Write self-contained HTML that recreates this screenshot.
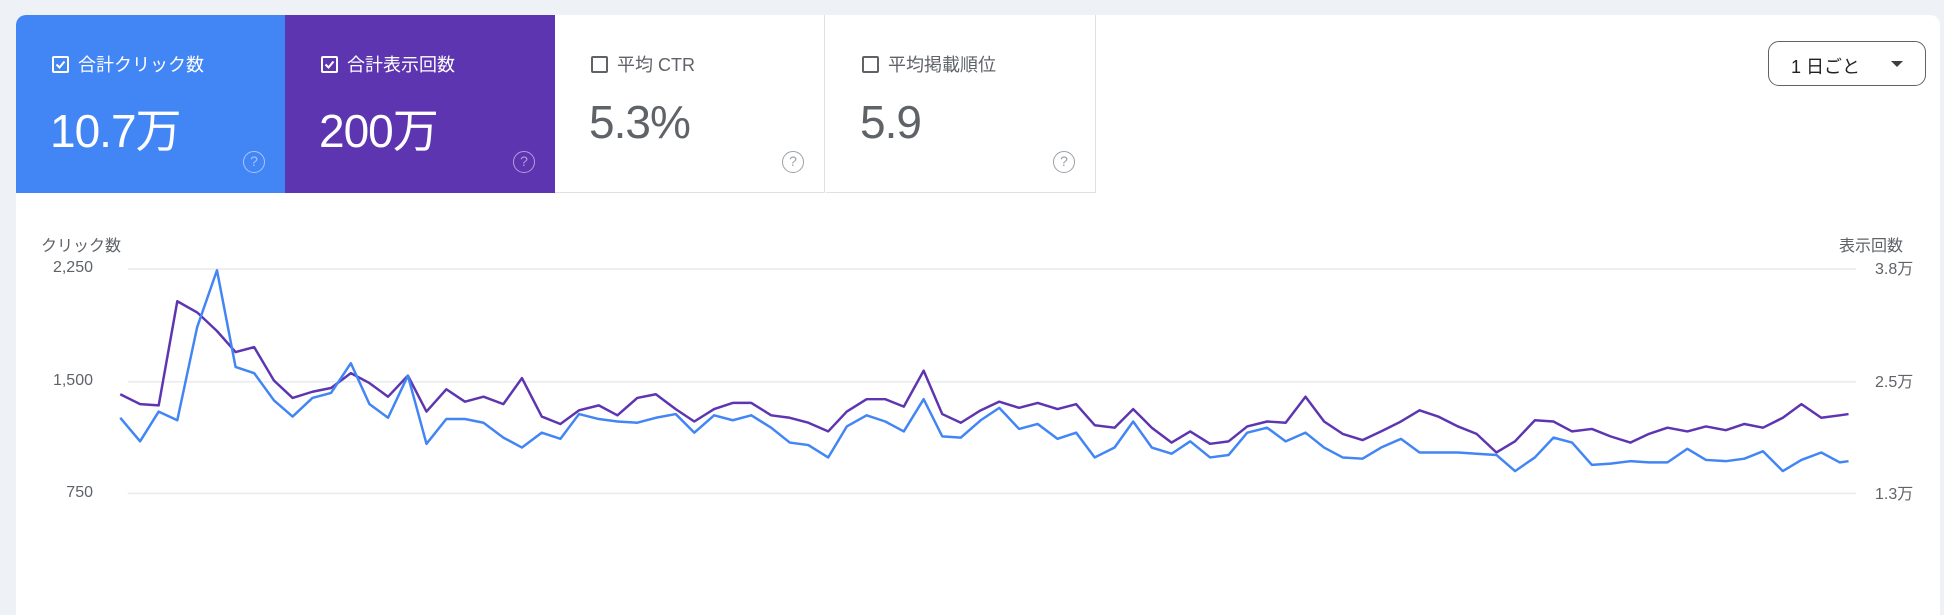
<!DOCTYPE html>
<html><head><meta charset="utf-8"><style>
*{margin:0;padding:0;box-sizing:border-box}
body{width:1944px;height:602px;background:#eef2f7;position:relative;overflow:hidden;font-family:"Liberation Sans","Noto Sans CJK JP",sans-serif}
.card{position:absolute;left:16px;top:15px;width:1924px;height:600px;background:#fff;border-radius:10px 10px 0 0}
.tile{position:absolute;top:15px;height:178px;width:270px}
.lab{position:absolute;left:36px;top:36px;font-size:18px;display:flex;align-items:center}
.cb{width:17px;height:17px;border:2px solid currentColor;border-radius:2px;margin-right:9px;position:relative}
.num{position:absolute;left:34px;top:78px;font-size:46px;letter-spacing:-1px}
.q{position:absolute;right:20px;top:136px;width:22px;height:22px;border:1.5px solid currentColor;border-radius:50%;font-size:14px;text-align:center;line-height:19px}
.axl{position:absolute;font-size:16px;color:#5f6368}
</style></head><body>
<div class="card"></div>
<div class="tile" style="left:16px;background:#4285f4;color:#fff;border-radius:10px 0 0 0;width:269px">
 <div class="lab"><div class="cb"><svg width="13" height="13" viewBox="0 0 13 13" style="position:absolute;left:0;top:0"><path d="M2.5 6.5l3 3 5-6" stroke="#fff" stroke-width="2" fill="none"/></svg></div>合計クリック数</div>
 <div class="num" style="top:80px">10.7万</div><div class="q" style="color:#a8c7fa">?</div></div>
<div class="tile" style="left:285px;background:#5e35b1;color:#fff">
 <div class="lab"><div class="cb"><svg width="13" height="13" viewBox="0 0 13 13" style="position:absolute;left:0;top:0"><path d="M2.5 6.5l3 3 5-6" stroke="#fff" stroke-width="2" fill="none"/></svg></div>合計表示回数</div>
 <div class="num" style="top:80px">200万</div><div class="q" style="color:#b39ddb">?</div></div>
<div class="tile" style="left:555px;background:#fff;color:#5f6368;border-right:1px solid #e0e0e0;border-bottom:1px solid #e0e0e0">
 <div class="lab"><div class="cb"></div>平均 CTR</div>
 <div class="num" style="top:80px">5.3%</div><div class="q" style="color:#9aa0a6">?</div></div>
<div class="tile" style="left:826px;background:#fff;color:#5f6368;border-right:1px solid #e0e0e0;border-bottom:1px solid #e0e0e0">
 <div class="lab"><div class="cb"></div>平均掲載順位</div>
 <div class="num" style="top:80px">5.9</div><div class="q" style="color:#9aa0a6">?</div></div>
<div style="position:absolute;left:1768px;top:41px;width:158px;height:45px;border:1px solid #5f6368;border-radius:11px;font-size:18px;color:#202124;padding:11px 0 0 22px">1 日ごと<span style="position:absolute;right:22px;top:19px;border:6px solid transparent;border-top:6px solid #3c4043;border-bottom:0"></span></div>
<div class="axl" style="left:41px;top:232px">クリック数</div>
<div class="axl" style="left:1839px;top:232px">表示回数</div>
<div class="axl" style="right:1851px;top:259px;text-align:right">2,250</div>
<div class="axl" style="right:1851px;top:372px">1,500</div>
<div class="axl" style="right:1851px;top:484px">750</div>
<div class="axl" style="left:1875px;top:255px">3.8万</div>
<div class="axl" style="left:1875px;top:368px">2.5万</div>
<div class="axl" style="left:1875px;top:480px">1.3万</div>
<svg style="position:absolute;left:0;top:0" width="1944" height="602" viewBox="0 0 1568 485.6" preserveAspectRatio="none">
<g stroke="#e8eaed" stroke-width="1.2"><line x1="103" y1="217" x2="1497" y2="217"/><line x1="103" y1="308" x2="1497" y2="308"/><line x1="103" y1="398" x2="1497" y2="398"/></g>
<polyline fill="none" stroke="#5e35b1" stroke-width="2" stroke-linejoin="round" points="97,318 113,326 128,327 143,243 159,252 175,267 190,284 205,280 221,307 236,321 252,316 267,313 283,301 298,309 313,320 329,303 344,332 360,314 375,324 390,320 406,326 421,305 437,336 452,342 467,331 483,327 498,335 514,321 529,318 545,330 560,340 576,330 591,325 606,325 622,335 637,337 652,341 668,348 683,332 699,322 714,322 729,328 745,299 760,334 775,341 791,331 806,324 822,329 837,325 853,330 868,326 883,343 899,345 914,330 929,345 945,357 960,348 976,358 991,356 1006,344 1022,340 1037,341 1053,320 1068,340 1083,350 1099,355 1114,348 1130,340 1145,331 1160,336 1176,344 1191,350 1207,365 1222,356 1238,339 1253,340 1268,348 1284,346 1299,352 1315,357 1330,350 1345,345 1361,348 1376,344 1392,347 1407,342 1422,345 1438,337 1453,326 1469,337 1484,335 1491,334"/>
<polyline fill="none" stroke="#4285f4" stroke-width="2" stroke-linejoin="round" points="97,337 113,356 128,332 143,339 159,264 175,218 190,296 205,301 221,323 236,336 252,321 267,317 283,293 298,326 313,337 329,303 344,358 360,338 375,338 390,341 406,353 421,361 437,349 452,354 467,334 483,338 498,340 514,341 529,337 545,334 560,349 576,335 591,339 606,335 622,345 637,357 652,359 668,369 683,344 699,335 714,340 729,348 745,322 760,352 775,353 791,339 806,329 822,346 837,342 853,354 868,349 883,369 899,361 914,340 929,361 945,366 960,356 976,369 991,367 1006,349 1022,345 1037,356 1053,349 1068,361 1083,369 1099,370 1114,361 1130,354 1145,365 1160,365 1176,365 1191,366 1207,367 1222,380 1238,369 1253,353 1268,357 1284,375 1299,374 1315,372 1330,373 1345,373 1361,362 1376,371 1392,372 1407,370 1422,364 1438,380 1453,371 1469,365 1484,373 1491,372"/>
</svg>
</body></html>
